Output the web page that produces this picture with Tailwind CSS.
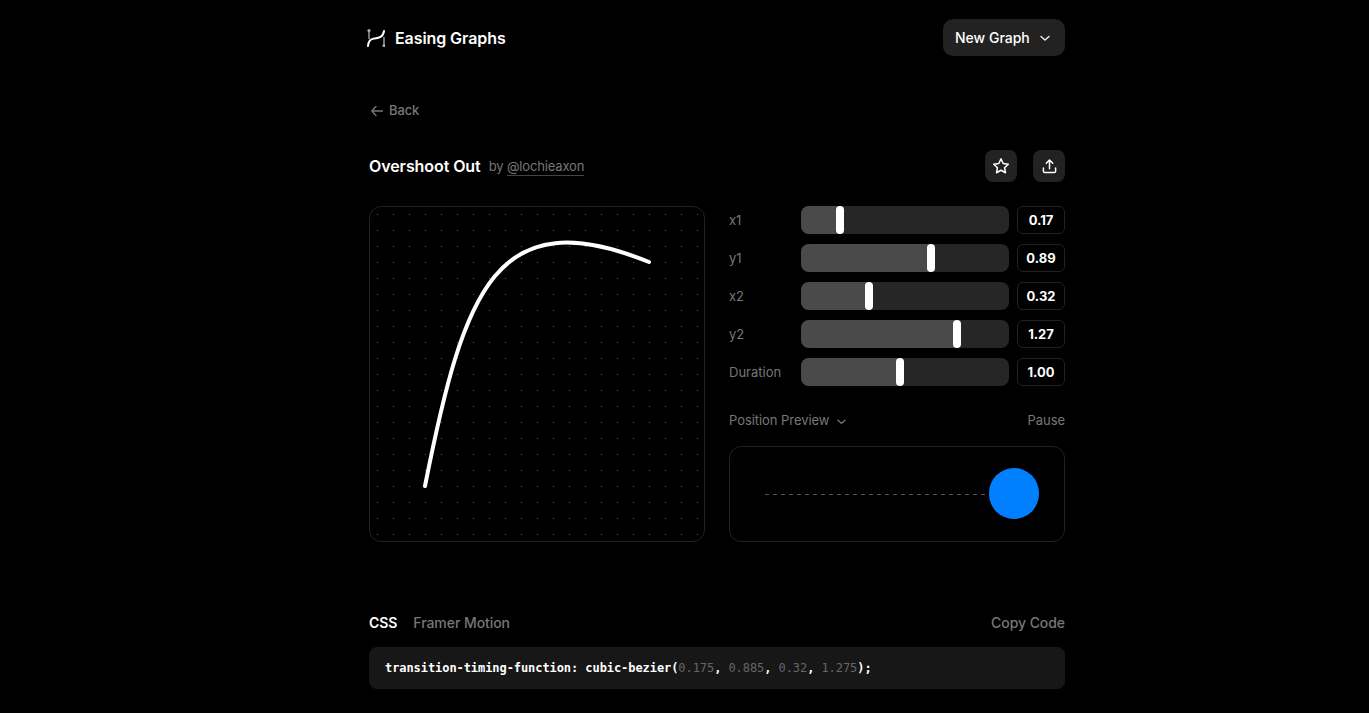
<!DOCTYPE html>
<html>
<head>
<meta charset="utf-8">
<script src="https://cdn.jsdelivr.net/npm/@tailwindcss/browser@4"></script>
</head>
<body class="bg-black h-[713px] overflow-hidden font-['Inter',sans-serif]">
<div class="w-[696px] ml-[369px] pt-[19px]">
  <header class="flex items-center justify-between h-[37px]">
    <div class="flex items-center gap-[10px]">
      <svg class="w-[18px] h-[18px] -ml-[2px]" viewBox="0 0 18 18" fill="none">
        <path d="M2 1.5V10M17 8V17" stroke="#999" stroke-width="1.5" />
        <path d="M1 17C1.5 11 4 10 7 9.5C11 9 16 9 17 2" stroke="#fff" stroke-width="2" stroke-linecap="round"/>
        <circle cx="2" cy="1.6" r="1.6" fill="#aaa"/><circle cx="17" cy="16.6" r="1.6" fill="#aaa"/>
      </svg>
      <span class="text-white text-base font-semibold leading-6 tracking-[-0.08px]">Easing Graphs</span>
    </div>
    <button class="flex items-center h-[37px] w-[122px] pl-3 bg-[#222] rounded-[10px] text-white text-sm font-medium">
      New Graph
      <svg class="ml-[9px] w-3 h-3" viewBox="0 0 12 12" fill="none"><path d="M2 4.5L6 8L10 4.5" stroke="#eee" stroke-width="1.4" stroke-linecap="round" stroke-linejoin="round"/></svg>
    </button>
  </header>

  <a class="mt-[45px] flex items-center gap-[6px] h-5 pl-[2px] text-[13px] font-medium text-[#777] tracking-[-0.1px]">
    <svg class="w-[12px] h-[12px]" viewBox="0 0 12 12" fill="none"><path d="M11.5 6H1M5 1.5L.8 6L5 10.5" stroke="#777" stroke-width="1.3" stroke-linecap="round" stroke-linejoin="round"/></svg>
    Back
  </a>

  <div class="mt-[29px] flex items-center justify-between h-8">
    <div class="flex items-center gap-2">
      <h1 class="text-white text-base font-semibold tracking-[-0.08px]">Overshoot Out</h1>
      <span class="pt-[2px] text-[13px] text-[#777] tracking-[-0.15px]">by <span class="border-b border-[#444] pb-[1px]">@lochieaxon</span></span>
    </div>
    <div class="flex gap-4">
      <button class="size-8 rounded-lg bg-[#222] flex items-center justify-center">
        <svg class="size-[18px]" viewBox="0 0 24 24" fill="none" stroke="#fff" stroke-width="2" stroke-linejoin="round"><path d="M12 2.5l2.9 6.2 6.8.9-5 4.7 1.3 6.7-6-3.3-6 3.3 1.3-6.7-5-4.7 6.8-.9z"/></svg>
      </button>
      <button class="size-8 rounded-lg bg-[#222] flex items-center justify-center">
        <svg class="size-[15px]" viewBox="0 0 16 16" fill="none" stroke="#fff" stroke-width="1.6" stroke-linecap="round" stroke-linejoin="round"><path d="M8 10.5V1.5M4.5 4.5L8 1.2L11.5 4.5M1.5 9.5V13a1.5 1.5 0 0 0 1.5 1.5h10a1.5 1.5 0 0 0 1.5-1.5V9.5"/></svg>
      </button>
    </div>
  </div>

  <div class="mt-[24px] flex gap-6">
    <div class="relative size-[336px] shrink-0 rounded-xl border border-[#222] overflow-hidden">
      <svg class="absolute -left-px -top-px" width="336" height="336" viewBox="0 0 336 336" fill="none">
        <defs><pattern id="dots" x="0" y="0" width="16" height="16" patternUnits="userSpaceOnUse"><rect x="8" y="8" width="1" height="1" fill="#555"/></pattern></defs>
        <rect width="336" height="336" fill="url(#dots)"/>
        <path d="M56 280C95.2 81.8 127.7 -5.6 280 56" stroke="#fff" stroke-width="4" stroke-linecap="round"/>
      </svg>
    </div>

    <div class="w-[336px]">
      <div class="flex flex-col gap-[10px]">
        <div class="flex items-center h-7">
          <span class="w-[72px] pt-[2px] text-[13px] text-[#777]">x1</span>
          <div class="relative w-[208px] h-7 rounded-lg bg-[#262626] overflow-hidden">
            <div class="h-full w-[39px] bg-[#4a4a4a]"></div>
            <div class="absolute top-0 left-[35px] w-2 h-7 rounded-[4px] bg-white"></div>
          </div>
          <span class="ml-2 w-12 h-7 pt-[1px] flex items-center justify-center rounded-md border border-[#222] text-white text-[13px] font-bold">0.17</span>
        </div>
        <div class="flex items-center h-7">
          <span class="w-[72px] pt-[2px] text-[13px] text-[#777]">y1</span>
          <div class="relative w-[208px] h-7 rounded-lg bg-[#262626] overflow-hidden">
            <div class="h-full w-[130px] bg-[#4a4a4a]"></div>
            <div class="absolute top-0 left-[126px] w-2 h-7 rounded-[4px] bg-white"></div>
          </div>
          <span class="ml-2 w-12 h-7 pt-[1px] flex items-center justify-center rounded-md border border-[#222] text-white text-[13px] font-bold">0.89</span>
        </div>
        <div class="flex items-center h-7">
          <span class="w-[72px] pt-[2px] text-[13px] text-[#777]">x2</span>
          <div class="relative w-[208px] h-7 rounded-lg bg-[#262626] overflow-hidden">
            <div class="h-full w-[68px] bg-[#4a4a4a]"></div>
            <div class="absolute top-0 left-[64px] w-2 h-7 rounded-[4px] bg-white"></div>
          </div>
          <span class="ml-2 w-12 h-7 pt-[1px] flex items-center justify-center rounded-md border border-[#222] text-white text-[13px] font-bold">0.32</span>
        </div>
        <div class="flex items-center h-7">
          <span class="w-[72px] pt-[2px] text-[13px] text-[#777]">y2</span>
          <div class="relative w-[208px] h-7 rounded-lg bg-[#262626] overflow-hidden">
            <div class="h-full w-[156px] bg-[#4a4a4a]"></div>
            <div class="absolute top-0 left-[152px] w-2 h-7 rounded-[4px] bg-white"></div>
          </div>
          <span class="ml-2 w-12 h-7 pt-[1px] flex items-center justify-center rounded-md border border-[#222] text-white text-[13px] font-bold">1.27</span>
        </div>
        <div class="flex items-center h-7">
          <span class="w-[72px] pt-[2px] text-[13px] text-[#777]">Duration</span>
          <div class="relative w-[208px] h-7 rounded-lg bg-[#262626] overflow-hidden">
            <div class="h-full w-[99px] bg-[#4a4a4a]"></div>
            <div class="absolute top-0 left-[95px] w-2 h-7 rounded-[4px] bg-white"></div>
          </div>
          <span class="ml-2 w-12 h-7 pt-[1px] flex items-center justify-center rounded-md border border-[#222] text-white text-[13px] font-bold">1.00</span>
        </div>
      </div>

      <div class="mt-6 h-5 pt-[2px] flex items-center justify-between text-[13px] text-[#777] tracking-[-0.06px]">
        <div class="flex items-center gap-[7px]">
          Position Preview
          <svg class="w-[11px] h-[11px]" viewBox="0 0 12 12" fill="none"><path d="M2 4.5L6 8L10 4.5" stroke="#888" stroke-width="1.3" stroke-linecap="round" stroke-linejoin="round"/></svg>
        </div>
        <span>Pause</span>
      </div>

      <div class="mt-4 relative h-[96px] rounded-xl border border-[#222] flex items-center pl-[35px]">
        <svg class="shrink-0" width="224" height="1" viewBox="0 0 224 1"><line x1="0" y1="0.5" x2="224" y2="0.5" stroke="#555" stroke-width="1" stroke-dasharray="4 4"/></svg>
        <div class="w-[50px] h-[51px] mb-[1px] shrink-0 rounded-full bg-[#0080ff]"></div>
      </div>
    </div>
  </div>

  <div class="mt-[71px] flex items-center justify-between h-5 text-sm font-medium text-[#777] tracking-[-0.06px]">
    <div class="flex gap-4">
      <span class="text-white font-semibold">CSS</span>
      <span>Framer Motion</span>
    </div>
    <span>Copy Code</span>
  </div>

  <div class="mt-[14px] h-[42px] rounded-lg bg-[#171717] flex items-center px-4 font-['DejaVu_Sans_Mono',monospace] text-[12px] font-bold tracking-[-0.07px] text-white whitespace-pre">transition-timing-function: cubic-bezier(<span class="font-normal text-[#666]">0.175</span>, <span class="font-normal text-[#666]">0.885</span>, <span class="font-normal text-[#666]">0.32</span>, <span class="font-normal text-[#666]">1.275</span>);</div>
</div>
</body>
</html>
